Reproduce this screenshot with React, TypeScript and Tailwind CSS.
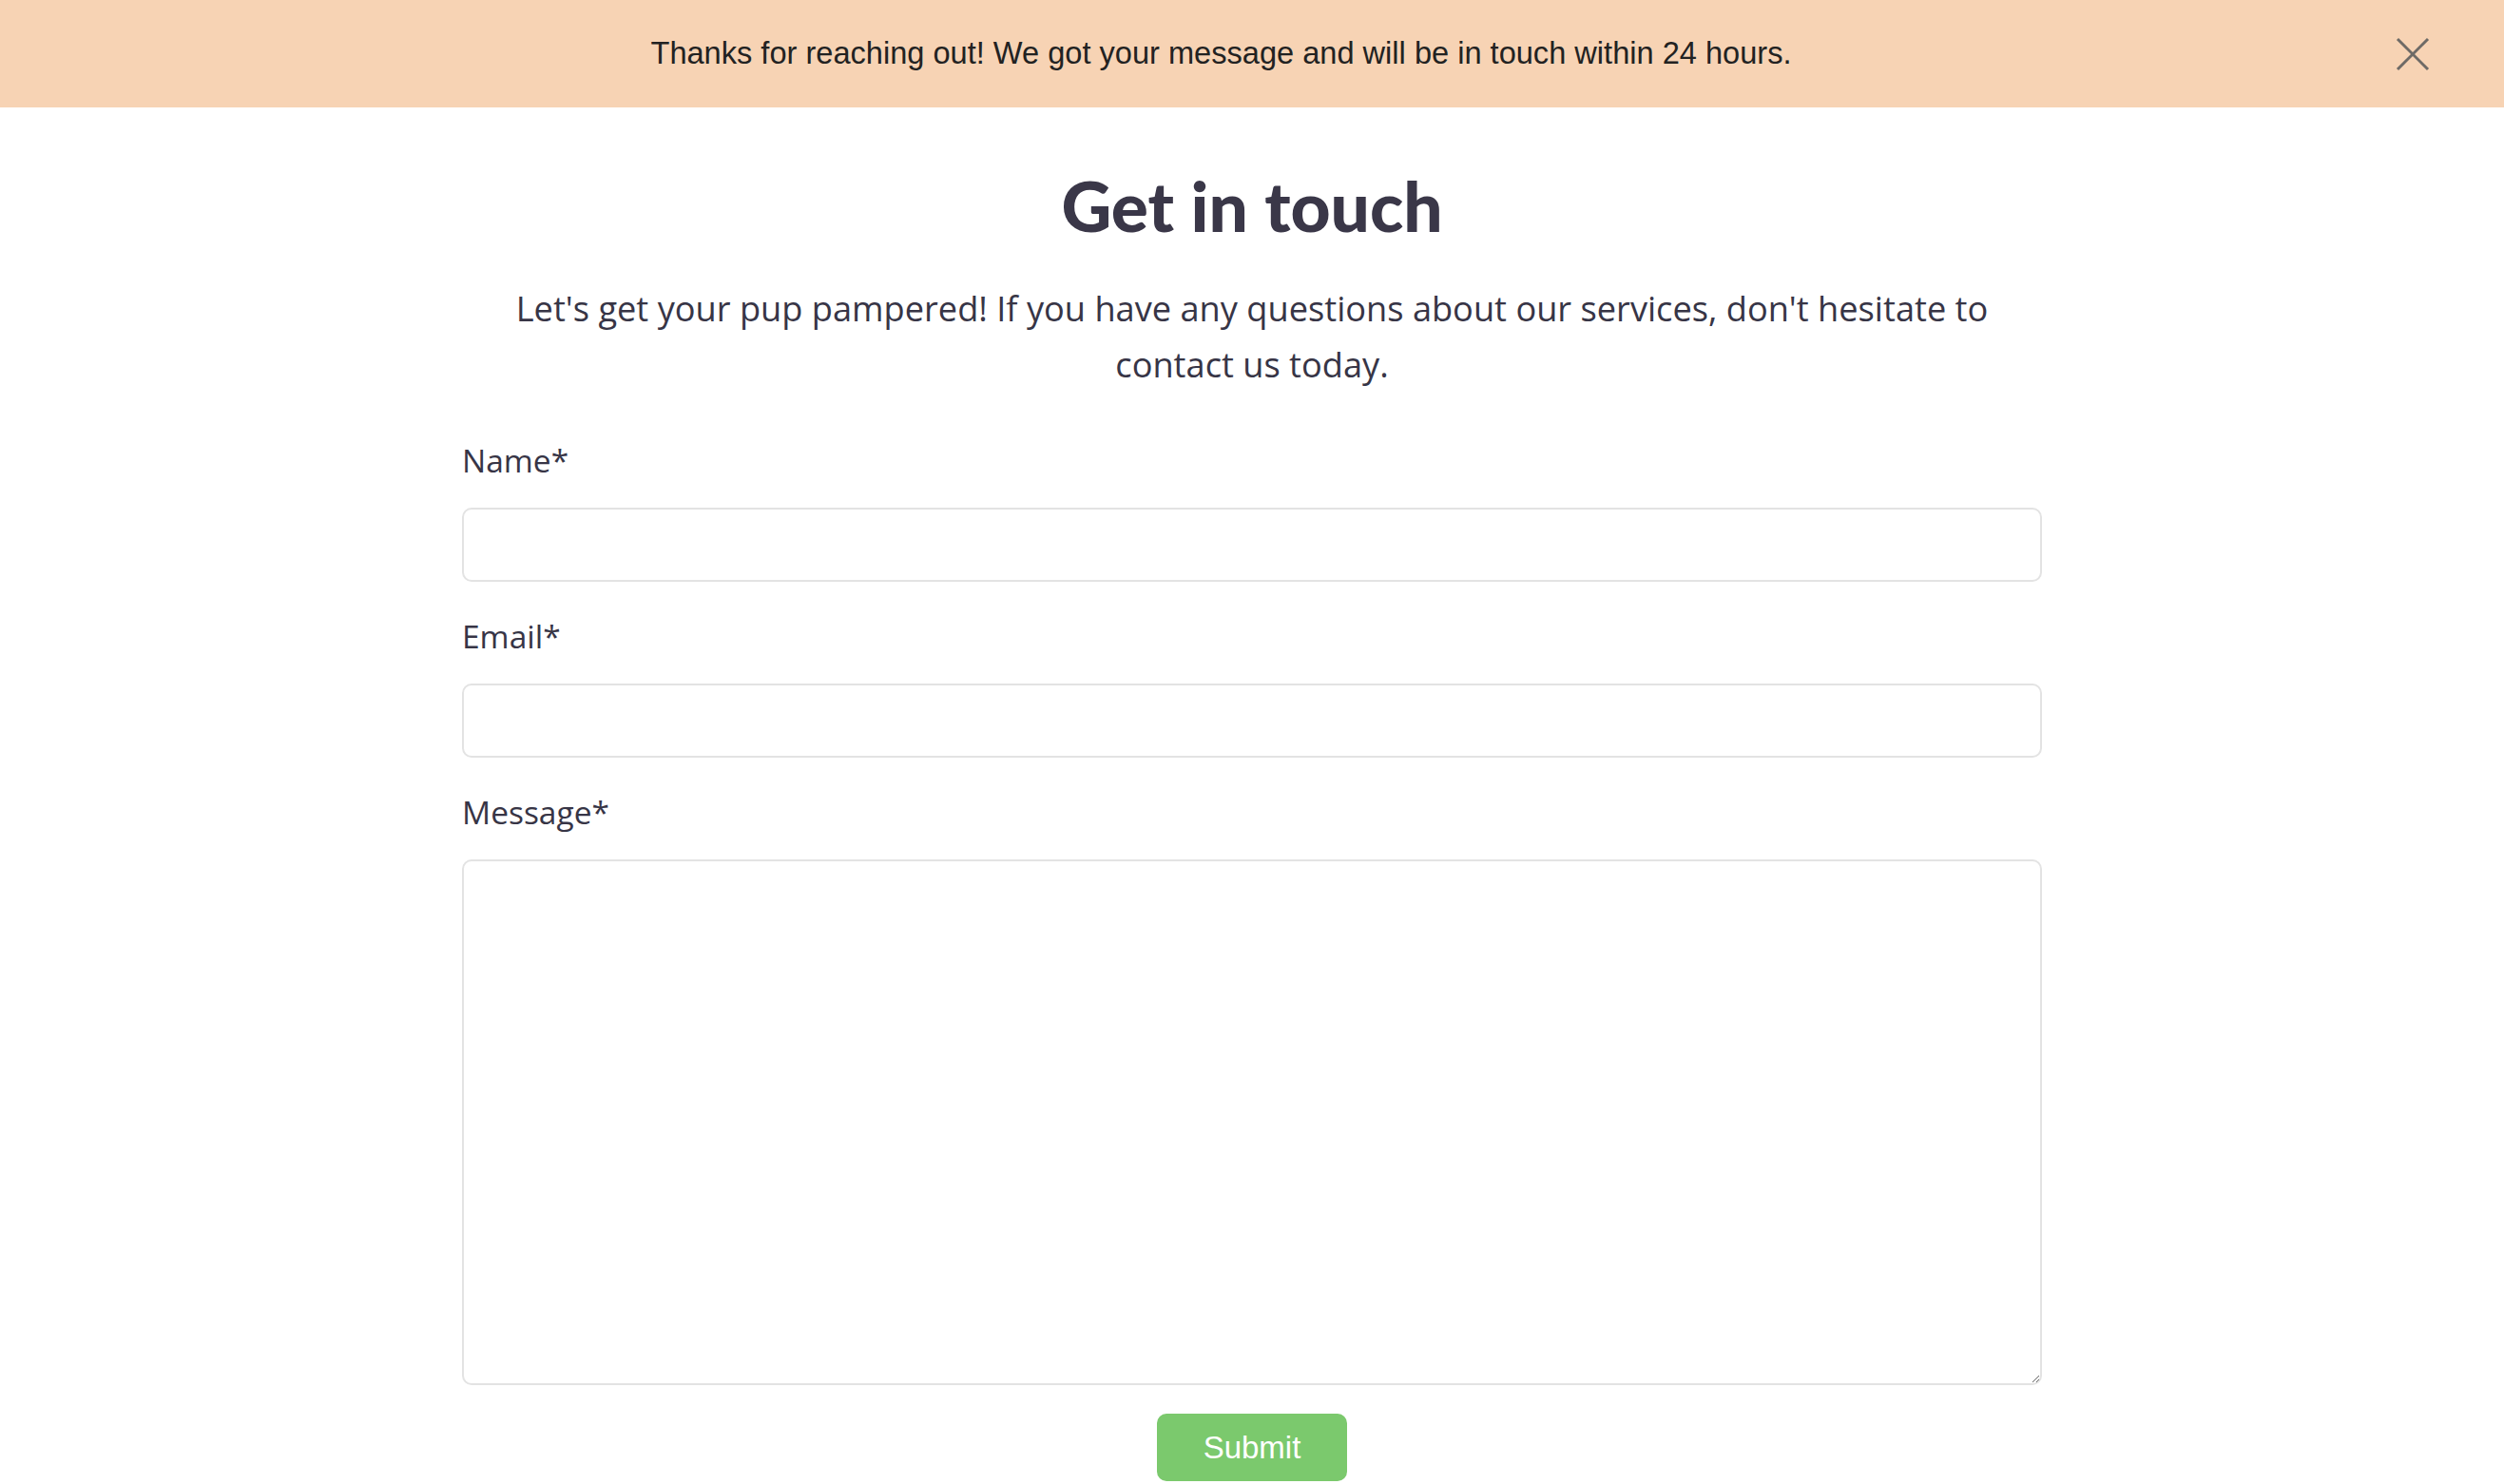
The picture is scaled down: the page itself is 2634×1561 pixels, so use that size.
import { useState } from 'react'

const ink = 'text-[#373546]'

function Field({ label, tall }: { label: string; tall?: boolean }) {
  return (
    <div className="flex flex-col">
      <label className={`text-[33.5px] leading-[54px] mb-[23px] ${ink}`}>{label}</label>
      {tall ? (
        <textarea className="h-[553px] w-full rounded-[10px] border-2 border-[#e3e3e3] bg-white px-4 py-3 text-[32px] outline-none" />
      ) : (
        <input
          type="text"
          className="h-[78px] w-full rounded-[10px] border-2 border-[#e3e3e3] bg-white px-4 text-[32px] outline-none"
        />
      )}
    </div>
  )
}

export default function App() {
  const [showBanner, setShowBanner] = useState(true)

  return (
    <div className="min-h-screen bg-white" style={{ fontFamily: '"Open Sans", sans-serif' }}>
      {/* Success banner */}
      {showBanner && (
        <div className="flex h-[113px] items-center bg-[#f7d3b4] px-16">
          <p
            className="flex-1 text-center text-[32.6px] text-[#222222]"
            style={{ fontFamily: '"Liberation Sans", Arial, sans-serif' }}
          >
            Thanks for reaching out! We got your message and will be in touch within 24 hours.
          </p>
          <button
            onClick={() => setShowBanner(false)}
            className="flex h-[65px] w-[65px] items-center justify-center text-[#6e6a66]"
            title="Close"
          >
            <svg width="36" height="36" viewBox="0 0 36 36" fill="none" stroke="currentColor" strokeWidth="3">
              <line x1="2" y1="2" x2="34" y2="34" />
              <line x1="34" y1="2" x2="2" y2="34" />
            </svg>
          </button>
        </div>
      )}

      {/* Contact form */}
      <div className="mx-auto flex w-[1662px] flex-col pt-[67px]">
        <h1
          className="text-center text-[73px] font-black leading-none text-[#3a3748]"
          style={{ fontFamily: 'Lato, sans-serif' }}
        >
          Get in touch
        </h1>
        <p className={`mt-[42px] text-center text-[36.2px] leading-[59px] ${ink}`}>
          Let's get your pup pampered! If you have any questions about our services, don't hesitate to
          contact us today.
        </p>

        <form className="mt-[44px] flex flex-col gap-[30px]" onSubmit={(e) => e.preventDefault()}>
          <Field label="Name*" />
          <Field label="Email*" />
          <Field label="Message*" tall />
          <div className="flex justify-center">
            <button
              type="submit"
              className="h-[71px] w-[200px] rounded-[10px] bg-[#7bc96d] text-[33px] text-white"
              style={{ fontFamily: '"Liberation Sans", Arial, sans-serif' }}
            >
              Submit
            </button>
          </div>
        </form>
      </div>
    </div>
  )
}
